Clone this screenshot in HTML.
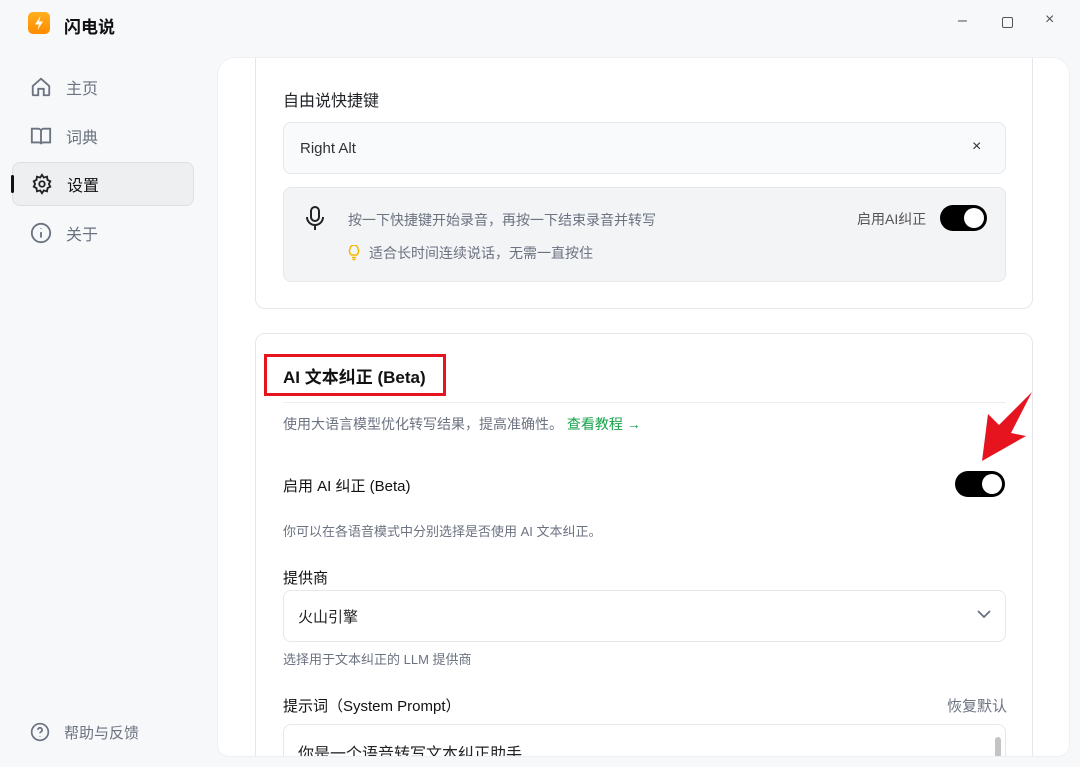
<!DOCTYPE html>
<html><head><meta charset="utf-8"><style>
*{box-sizing:border-box;margin:0;padding:0}
body{width:1080px;height:767px;overflow:hidden;background:#f7f8fa;font-family:"Liberation Sans","Noto Sans CJK SC",sans-serif;position:relative;color:#1f2328}
.abs{position:absolute}
.nav{position:absolute;left:12px;width:182px;height:44px;display:flex;align-items:center;font-size:16px;color:#6b7280}
.nav svg{margin-left:18px;margin-right:14px}
.main{position:absolute;left:217px;top:57px;width:853px;height:700px;background:#fff;border-radius:18px 18px 12px 12px;border:1px solid #eef0f3;overflow:hidden}
.card{position:absolute;left:37px;width:778px;border:1px solid #e5e7eb;border-radius:10px;background:#fff}
.t{position:absolute;white-space:nowrap}
.tog{position:absolute;width:50px;height:26px;background:#000;border-radius:13px}
.tog::after{content:"";position:absolute;right:3px;top:3px;width:20px;height:20px;border-radius:50%;background:#fff}
</style></head><body>
<div class="abs" style="left:28px;top:12px;width:22px;height:22px;border-radius:5px;background:linear-gradient(#ffb020,#ff8a00)"></div>
<svg class="abs" style="left:28px;top:12px" width="22" height="22"><path d="M12.5 4 L7 12.5 H11 L9.5 18 L15 9.5 H11 Z" fill="#fff"/></svg>
<div class="t" style="left:64px;top:13px;font-size:17px;font-weight:bold;color:#111">闪电说</div>
<div class="t" style="left:958px;top:12px;font-size:16px;color:#555">–</div>
<div class="abs" style="left:1002px;top:17px;width:11px;height:11px;border:1.3px solid #555;border-radius:2px"></div>
<div class="t" style="left:1045px;top:11px;font-size:16px;color:#555">×</div>

<div class="nav" style="top:65px"><svg width="22" height="22" viewBox="0 0 24 24" fill="none" stroke="#6b7280" stroke-width="2"><path d="M3 11 L12 3 L21 11 V20 a1 1 0 0 1-1 1 H15 V14 H9 V21 H4 a1 1 0 0 1-1-1Z"/></svg>主页</div>
<div class="nav" style="top:114px"><svg width="22" height="22" viewBox="0 0 24 24" fill="none" stroke="#6b7280" stroke-width="2"><path d="M2 4 H9 a3 3 0 0 1 3 3 V21 a2 2 0 0 0-2-2 H2Z M22 4 H15 a3 3 0 0 0-3 3 V21 a2 2 0 0 1 2-2 H22Z"/></svg>词典</div>
<div class="nav" style="top:162px;background:#eeeff1;border:1px solid #dedfe2;border-radius:8px;color:#111"><svg width="22" height="22" viewBox="0 0 24 24" fill="none" stroke="#222" stroke-width="2"><circle cx="12" cy="12" r="3"/><path d="M12 2 l2 3 3.5-1 .5 3.5 3 1.5-1.5 3 1.5 3-3 1.5-.5 3.5-3.5-1-2 3-2-3-3.5 1-.5-3.5-3-1.5 1.5-3-1.5-3 3-1.5.5-3.5 3.5 1z"/></svg>设置</div>
<div class="abs" style="left:11px;top:175px;width:3px;height:18px;background:#111;border-radius:2px"></div>
<div class="nav" style="top:211px"><svg width="22" height="22" viewBox="0 0 24 24" fill="none" stroke="#6b7280" stroke-width="2"><circle cx="12" cy="12" r="10"/><path d="M12 11 v6 M12 7 v.5"/></svg>关于</div>
<div class="nav" style="top:710px;font-size:15px"><svg width="20" height="20" viewBox="0 0 24 24" fill="none" stroke="#6b7280" stroke-width="2"><circle cx="12" cy="12" r="10"/><path d="M9.5 9.5 a2.5 2.5 0 1 1 3.5 2.3 c-.7.4-1 .9-1 1.7 M12 17 v.5"/></svg>帮助与反馈</div>

<div class="main">
 <div class="card" style="top:-20px;height:271px">
  <div class="t" style="left:27px;top:48px;font-size:16px">自由说快捷键</div>
  <div class="abs" style="left:27px;top:83px;width:723px;height:52px;border:1px solid #e5e7eb;border-radius:8px;background:#f9fafb"></div>
  <div class="t" style="left:44px;top:101px;font-size:15px;color:#333">Right Alt</div>
  <div class="t" style="left:716px;top:99px;font-size:16px;color:#333">×</div>
  <div class="abs" style="left:27px;top:148px;width:723px;height:95px;border:1px solid #e5e7eb;border-radius:8px;background:#f3f4f6"></div>
  <svg class="abs" style="left:48px;top:166px" width="22" height="26" viewBox="0 0 22 26" fill="none" stroke="#222" stroke-width="2"><rect x="7" y="2" width="8" height="14" rx="4"/><path d="M3 12 a8 8 0 0 0 16 0 M11 20 v5"/></svg>
  <div class="t" style="left:92px;top:171px;font-size:14px;color:#6b7280">按一下快捷键开始录音，再按一下结束录音并转写</div>
  <div class="t" style="left:601px;top:170px;font-size:14px;color:#555">启用AI纠正</div>
  <div class="tog" style="left:684px;top:166px;width:47px"></div>
  <svg class="abs" style="left:92px;top:206px" width="12" height="16" viewBox="0 0 12 16" fill="none" stroke="#f5b800" stroke-width="1.5"><path d="M3.5 10 C1 8 1 5.5 2 4 A4 4 0 0 1 10 4 C11 5.5 11 8 8.5 10 Z M4 12.5 H8 M4.5 14.5 H7.5"/></svg>
  <div class="t" style="left:113px;top:204px;font-size:14px;color:#6b7280">适合长时间连续说话，无需一直按住</div>
 </div>
 <div class="card" style="top:275px;height:460px">
  <div class="abs" style="left:8px;top:20px;width:182px;height:42px;border:3px solid #e5141e"></div>
  <div class="t" style="left:27px;top:29px;font-size:17px;font-weight:bold;color:#111">AI 文本纠正 (Beta)</div>
  <div class="abs" style="left:27px;top:68px;width:723px;height:1px;background:#eceef1"></div>
  <div class="t" style="left:27px;top:80px;font-size:14px;color:#6b7280">使用大语言模型优化转写结果，提高准确性。 <span style="color:#16a34a">查看教程 →</span></div>
  <div class="t" style="left:27px;top:141px;font-size:15px;color:#111">启用 AI 纠正 (Beta)</div>
  <div class="tog" style="left:699px;top:137px"></div>
  <div class="t" style="left:27px;top:187px;font-size:13px;color:#6b7280">你可以在各语音模式中分别选择是否使用 AI 文本纠正。</div>
  <div class="t" style="left:27px;top:233px;font-size:15px;color:#111">提供商</div>
  <div class="abs" style="left:27px;top:256px;width:723px;height:52px;border:1px solid #e5e7eb;border-radius:8px"></div>
  <div class="t" style="left:42px;top:272px;font-size:15px;color:#222">火山引擎</div>
  <svg class="abs" style="left:720px;top:274px" width="16" height="12"><path d="M2 3 L8 9 L14 3" fill="none" stroke="#6b7280" stroke-width="1.8"/></svg>
  <div class="t" style="left:27px;top:315px;font-size:13px;color:#6b7280">选择用于文本纠正的 LLM 提供商</div>
  <div class="t" style="left:27px;top:361px;font-size:15px;color:#111">提示词（System Prompt）</div>
  <div class="t" style="left:691px;top:361px;font-size:15px;color:#6b7280">恢复默认</div>
  <div class="abs" style="left:27px;top:390px;width:723px;height:80px;border:1px solid #e5e7eb;border-radius:8px"></div>
  <div class="t" style="left:42px;top:406px;font-size:16px;color:#222">你是一个语音转写文本纠正助手</div>
  <div class="abs" style="left:739px;top:403px;width:6px;height:30px;background:#c4c4c4;border-radius:3px"></div>
 </div>
</div>
<svg class="abs" style="left:970px;top:385px" width="70" height="85"><polygon points="12,76 18,29 29,40 62,7 41,48 56,51" fill="#e5141e"/></svg>
</body></html>
